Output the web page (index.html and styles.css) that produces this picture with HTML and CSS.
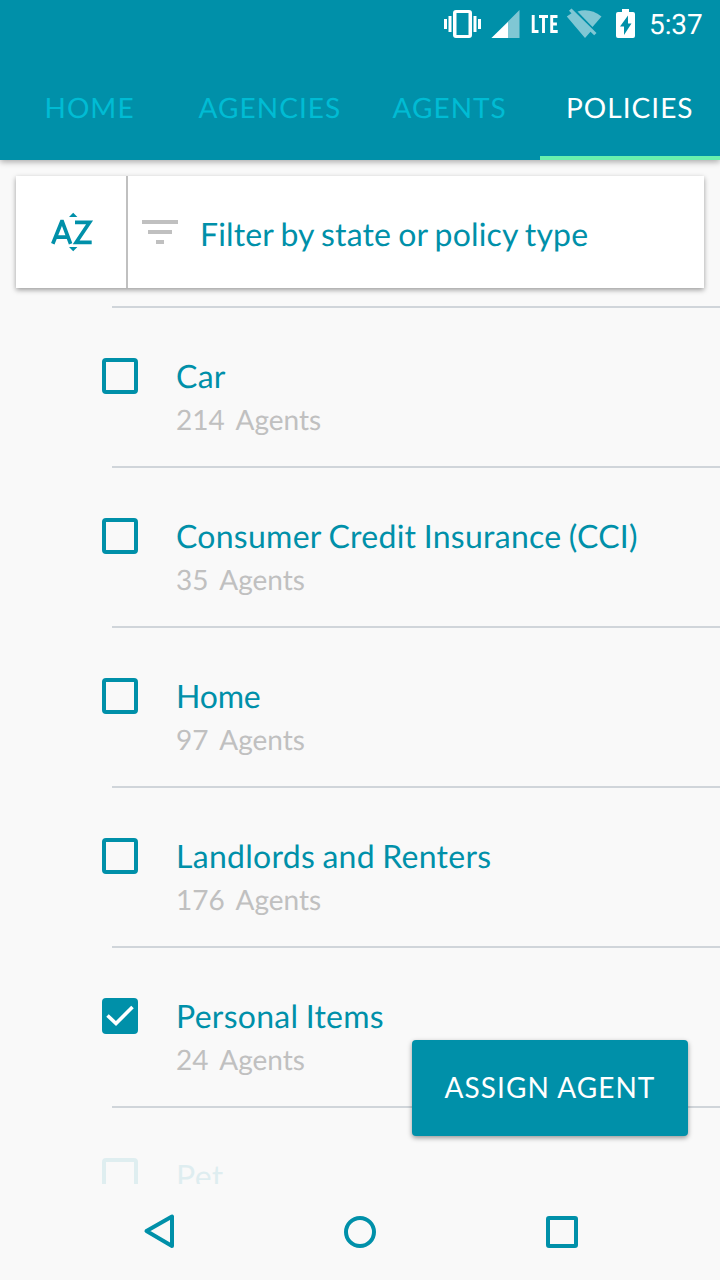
FILE: index.html
```
<!DOCTYPE html>
<html lang="en">
<head>
<meta charset="utf-8">
<title>Policies</title>
<link rel="stylesheet" href="styles.css">
</head>
<body>
<div class="screen">
  <header class="header">
    <div class="status">
      <svg class="status-icons" width="200" height="48" viewBox="440 0 200 48">
        <g fill="#fff">
          <path fill-rule="evenodd" d="M456 10h13a3 3 0 0 1 3 3v22a3 3 0 0 1-3 3h-13a3 3 0 0 1-3-3V13a3 3 0 0 1 3-3zM456.500 13v22h12V13z"/>
          <path d="M444 19h3v10h-3zM448.500 16h3v16h-3zM473.500 16h3v16h-3zM478 19h3v10h-3z"/>
        </g>
        <path d="M491.500 38L519.500 10v28z" fill="#80c7d4"/>
        <path d="M491.500 38L508 22v16z" fill="#fff"/>
        <path d="M533.200 15v16.500h5.300M539 16.500h9M543.500 15v18M557.500 16.500h-5.800v15h6M551.700 24h5.200" fill="none" stroke="#fff" stroke-width="2.900"/>
        <g fill="#80c7d4">
          <path d="M577.500 11.500Q590 7.500 601.500 16.500L592.500 27z"/>
          <path d="M571.500 8.500L596.500 33 594.200 35.300 590.500 31.700 585 38 566.800 16.500 571.500 13.200 569 10.700z"/>
        </g>
        <path d="M622 9h7v3h4q2 0 2 2v22q0 2-2 2h-15q-2 0-2-2V14q0-2 2-2h4z" fill="#fff"/>
        <path d="M628 15.500v8h3.500L624 35v-8.500h-4z" fill="#0090a9"/>
      </svg>
      <span class="clock">5:37</span>
    </div>
    <nav class="tabs">
      <a class="tab tab-home">HOME</a>
      <a class="tab tab-agencies">AGENCIES</a>
      <a class="tab tab-agents">AGENTS</a>
      <a class="tab tab-active">POLICIES</a>
    </nav>
  </header>
  <section class="filter">
    <div class="sort">
      <svg width="44" height="42" viewBox="50 211 44 42">
        <g fill="#0090a9"><path d="M69 217l4.200-4.300 4.200 4.300zM69 247l4.200 4.300 4.200-4.300z"/></g>
        <path d="M52.800 243.800L61.700 221.500h.6L70.600 243.800M56 237.200h12.300M75 222.300H89.600L76.200 242.300H91.700" fill="none" stroke="#0090a9" stroke-width="3.700"/>
      </svg>
    </div>
    <div class="query">
      <svg width="36" height="24" viewBox="0 0 36 24" fill="#c0c0c0"><path d="M0 0h36v4H0zM6 10h24v4H6zM14 20h8v4h-8z"/></svg>
      <span class="query-text">Filter by state or policy type</span>
    </div>
  </section>
  <main class="list">
    <article class="row"><i class="box"></i><div><h2 class="name">Car</h2><p class="count">214  Agents</p></div></article>
    <article class="row"><i class="box"></i><div><h2 class="name">Consumer Credit Insurance (CCI)</h2><p class="count">35  Agents</p></div></article>
    <article class="row"><i class="box"></i><div><h2 class="name tight">Home</h2><p class="count">97  Agents</p></div></article>
    <article class="row"><i class="box"></i><div><h2 class="name">Landlords and Renters</h2><p class="count">176  Agents</p></div></article>
    <article class="row"><i class="box checked"><svg width="36" height="36" viewBox="0 0 36 36"><path d="M5.500 17.500L14 25.500 30.500 9" fill="none" stroke="#fff" stroke-width="3.600"/></svg></i><div><h2 class="name">Personal Items</h2><p class="count">24  Agents</p></div></article>
    <article class="row faded"><i class="box"></i><div><h2 class="name">Pet</h2></div></article>
  </main>
  <button class="assign">ASSIGN AGENT</button>
  <nav class="system">
    <svg width="720" height="96" viewBox="0 1184 720 96" fill="none" stroke="#0090a9" stroke-width="4" stroke-linejoin="round">
      <path d="M146.500 1231L172 1216.500v29.500z"/>
      <circle cx="360" cy="1232" r="14"/>
      <rect x="548" y="1218" width="28" height="28" rx="1"/>
    </svg>
  </nav>
</div>
</body>
</html>
```
FILE: styles.css
```
* { box-sizing: border-box; margin: 0; padding: 0; }
body { background: #f9f9f9; font-family: Lato, "Liberation Sans", sans-serif; color: #0090a9; text-rendering: geometricPrecision; }
.screen { position: relative; width: 720px; height: 1280px; display: flex; flex-direction: column; overflow: hidden; }
.header { height: 160px; background: #0090a9; box-shadow: 0 2px 6px rgba(0,0,0,.32); }
.status { height: 48px; display: flex; justify-content: flex-end; padding-right: 18px; }
.status-icons { margin-right: 9px; }
.clock { width: 53px; font: 400 28px/49px Roboto, sans-serif; color: #fff; white-space: nowrap; letter-spacing: -.1px; }
.tabs { height: 112px; display: grid; grid-template-columns: 180px 180px 180px 180px; }
.tab { height: 112px; font-size: 28px; line-height: 118px; letter-spacing: 1.03px; color: #00bcd4; white-space: nowrap; }
.tab-home { padding-left: 44.5px; }
.tab-agencies { padding-left: 18.6px; }
.tab-agents { padding-left: 32.5px; }
.tab-active { padding-left: 26px; color: #fff; border-bottom: 4px solid #69f0ae; }
.filter { display: flex; height: 112px; margin: 16px 16px 0; background: #fff; box-shadow: 0 2px 5px rgba(0,0,0,.38); }
.sort { width: 112px; border-right: 2px solid #c0c0c0; padding: 35px 0 0 34px; }
.query { display: flex; padding: 44px 0 0 14px; }
.query-text { margin: -6px 0 0 22px; font-size: 32px; line-height: 40px; letter-spacing: .15px; word-spacing: -1.3px; white-space: nowrap; }
.list { height: 878px; margin-top: 18px; overflow: hidden; }
.row { position: relative; height: 160px; display: flex; padding: 52px 0 0 102px; background: linear-gradient(#d0d5da, #d0d5da) 112px 0 / 608px 2px no-repeat; }
.box { flex: none; width: 36px; height: 36px; margin-right: 38px; border: 4px solid #0090a9; border-radius: 4px; }
.checked { border: 0; background: #0090a9; }
.box svg { display: block; }
.name { font-size: 32px; font-weight: 400; line-height: 40px; margin-top: -2px; letter-spacing: .27px; word-spacing: -1.1px; white-space: nowrap; }
.tight { letter-spacing: -.2px; }
.count { font-size: 28px; line-height: 36px; margin-top: 5px; color: #c0c0c0; white-space: pre; word-spacing: -1.3px; }
.faded .box, .faded .name { opacity: .1; }
.assign { position: absolute; left: 412px; top: 1040px; width: 276px; height: 96px; border: 0; border-radius: 4px; background: #0090a9; color: #fff; font: 28px/94px Lato, sans-serif; padding-bottom: 2px; letter-spacing: 1.05px; white-space: nowrap; box-shadow: 0 2px 5px rgba(0,0,0,.4); }
.system { height: 96px; }
```
